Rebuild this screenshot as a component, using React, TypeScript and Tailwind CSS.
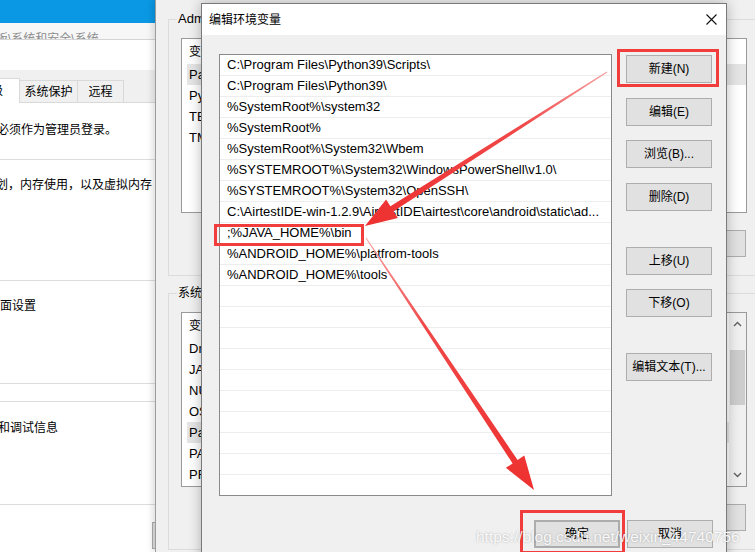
import React from "react";

const dialogPaths = [
  "C:\\Program Files\\Python39\\Scripts\\",
  "C:\\Program Files\\Python39\\",
  "%SystemRoot%\\system32",
  "%SystemRoot%",
  "%SystemRoot%\\System32\\Wbem",
  "%SYSTEMROOT%\\System32\\WindowsPowerShell\\v1.0\\",
  "%SYSTEMROOT%\\System32\\OpenSSH\\",
  "C:\\AirtestIDE-win-1.2.9\\AirtestIDE\\airtest\\core\\android\\static\\ad...",
  ";%JAVA_HOME%\\bin",
  "%ANDROID_HOME%\\platfrom-tools",
  "%ANDROID_HOME%\\tools",
  "", "", "", "", "", "", "", "", "", "", "",
];

const userVars = ["Path", "Python", "TEMP", "TMP"];
const systemVars = [
  "DriverData",
  "JAVA_HOME",
  "NUMBER_OF_PROCESSORS",
  "OS",
  "Path",
  "PATHEXT",
  "PROCESSOR_ARCHITECTURE",
];

function WinButton({
  label,
  className = "",
}: {
  label: string;
  className?: string;
}) {
  return (
    <div
      className={`flex w-[86px] items-center justify-center border border-[#adadad] bg-[#e1e1e1] text-[12px] ${className}`}
    >
      {label}
    </div>
  );
}

function VarList({ rows, scroll }: { rows: string[]; scroll?: boolean }) {
  return (
    <div className="relative h-[175px] border border-[#9a9a9a] bg-white text-[13px]">
      <div className="flex h-[25px] items-center pl-[7px] text-[12px]">变量</div>
      {rows.map((r) => (
        <div
          key={r}
          className={`ml-[5px] flex h-[21px] items-center pl-[2px] ${
            r === "Path" ? "bg-[#e5e5e5]" : ""
          }`}
        >
          {r}
        </div>
      ))}
      {scroll && (
        <div className="absolute right-0 top-0 flex h-full w-[17px] flex-col items-center bg-[#f0f0f0]">
          <svg width="9" height="6" className="mt-[8px]" viewBox="0 0 9 6">
            <path d="M1 5 L4.5 1.5 L8 5" fill="none" stroke="#606060" strokeWidth="1.4" />
          </svg>
          <div className="mt-[23px] h-[55px] w-[15px] bg-[#cdcdcd]" />
          <div className="flex-1" />
          <svg width="9" height="6" className="mb-[8px]" viewBox="0 0 9 6">
            <path d="M1 1 L4.5 4.5 L8 1" fill="none" stroke="#606060" strokeWidth="1.4" />
          </svg>
        </div>
      )}
    </div>
  );
}

function LeftWindow() {
  return (
    <div className="absolute left-0 top-0 flex h-[552px] w-[155px] flex-col overflow-hidden bg-white">
      <div className="h-[23px] bg-[#0a98e4]" />
      <div className="h-[17px] overflow-hidden border-b border-[#d4d4d4] bg-[#f7f7f7] pt-[8px] text-[12px] leading-[16px] text-[#8c8c8c]">
        <span className="ml-[-4px] whitespace-nowrap">板\系统和安全\系统</span>
      </div>
      <div className="h-[30px]" />
      <div className="flex h-[33px] items-end border-b border-[#d9d9d9] bg-[#f0f0f0]">
        <div className="-mb-px flex h-[25px] w-[20px] items-center overflow-hidden border-r border-t border-[#d9d9d9] bg-white">
          <span className="ml-[-9px]">级</span>
        </div>
        <div className="flex h-[22px] w-[58px] items-center justify-center border-r border-t border-[#d9d9d9]">
          系统保护
        </div>
        <div className="flex h-[22px] w-[46px] items-center justify-center border-r border-t border-[#d9d9d9]">
          远程
        </div>
      </div>
      <div className="h-[57px] border-b border-[#dcdcdc] pt-[19px] leading-[16px]">
        <span className="ml-[-3px] whitespace-nowrap">必须作为管理员登录。</span>
      </div>
      <div className="h-[121px] border-b border-[#dcdcdc] pt-[17px] leading-[16px]">
        <span className="ml-[-4px] whitespace-nowrap">划，内存使用，以及虚拟内存</span>
      </div>
      <div className="h-[103px] border-b border-[#dcdcdc] pt-[17px] leading-[16px]">
        <span className="whitespace-nowrap">面设置</span>
      </div>
      <div className="h-[18px] border-b border-[#dcdcdc]" />
      <div className="h-[103px] border-b border-[#dcdcdc] pt-[18px] leading-[16px]">
        <span className="ml-[-2px] whitespace-nowrap">和调试信息</span>
      </div>
      <div className="flex flex-1 justify-end pt-[17px]">
        <div className="h-[27px] w-[3px] border border-r-0 border-[#adadad] bg-[#e1e1e1]" />
      </div>
    </div>
  );
}

function MiddleWindow() {
  return (
    <div className="absolute left-[155px] top-0 h-[552px] w-[620px] border-l border-[#9c9c9c] bg-[#f0f0f0] pl-[12px] pt-[19px] shadow-[-3px_0_6px_rgba(0,0,0,0.12)]">
      <div className="relative h-[257px] w-[592px] border border-[#dcdcdc] px-[12px] pt-[18px]">
        <span className="absolute left-[8px] top-[-9px] bg-[#f0f0f0] px-[1px] text-[13px] leading-[16px]">
          Administrator 的用户变量
        </span>
        <VarList rows={userVars} />
        <div className="mt-[17px] flex h-[27px] justify-end gap-[8px] pr-[1px]">
          <WinButton label="新建(N)..." />
          <WinButton label="编辑(E)..." />
          <WinButton label="删除(D)" />
        </div>
      </div>
      <div className="relative mt-[17px] h-[257px] w-[592px] border border-[#dcdcdc] px-[12px] pt-[18px]">
        <span className="absolute left-[8px] top-[-9px] bg-[#f0f0f0] px-[1px] leading-[16px]">
          系统变量
        </span>
        <VarList rows={systemVars} scroll />
        <div className="mt-[17px] flex h-[27px] justify-end gap-[8px] pr-[1px]">
          <WinButton label="新建(W)..." />
          <WinButton label="编辑(I)..." />
          <WinButton label="删除(L)" />
        </div>
      </div>
    </div>
  );
}

function EditDialog() {
  return (
    <div className="absolute left-[201px] top-[3px] flex h-[560px] w-[526px] flex-col border border-[#7a7a7a] bg-[#f0f0f0] shadow-[0_0_12px_rgba(0,0,0,0.28)]">
      <div className="flex h-[31px] items-center justify-between bg-white pl-[7px] pr-[9px]">
        <span className="text-[12px]">编辑环境变量</span>
        <svg width="11" height="11" viewBox="0 0 11 11">
          <path d="M0.5 0.5 L10.5 10.5 M10.5 0.5 L0.5 10.5" stroke="#111" strokeWidth="1.1" />
        </svg>
      </div>
      <div className="flex pl-[17px] pt-[19px]">
        <div className="h-[442px] w-[393px] overflow-hidden border border-[#8a8a8a] bg-white text-[13px]">
          {dialogPaths.map((p, i) => (
            <div
              key={i}
              className="flex h-[21px] items-center whitespace-nowrap border-b border-[#ededed] pl-[7px]"
            >
              {p}
            </div>
          ))}
        </div>
        <div className="ml-[14px] flex flex-col pt-px">
          <WinButton label="新建(N)" className="h-[28px]" />
          <WinButton label="编辑(E)" className="mt-[15px] h-[28px]" />
          <WinButton label="浏览(B)..." className="mt-[14px] h-[28px]" />
          <WinButton label="删除(D)" className="mt-[15px] h-[28px]" />
          <WinButton label="上移(U)" className="mt-[36px] h-[28px]" />
          <WinButton label="下移(O)" className="mt-[14px] h-[28px]" />
          <WinButton label="编辑文本(T)..." className="mt-[36px] h-[28px]" />
        </div>
      </div>
      <div className="mt-[24px] flex justify-end gap-[7px] pr-[13px]">
        <WinButton label="确定" className="h-[28px] border-2 border-[#0078d7]" />
        <WinButton label="取消" className="h-[28px]" />
      </div>
    </div>
  );
}

function Annotations() {
  return (
    <>
      <svg className="pointer-events-none absolute left-0 top-0" width="755" height="552">
        <defs>
          <linearGradient id="a1" x1="607" y1="72" x2="365" y2="226" gradientUnits="userSpaceOnUse">
            <stop offset="0" stopColor="#f7a0a0" />
            <stop offset="0.35" stopColor="#f04848" />
            <stop offset="1" stopColor="#ee3030" />
          </linearGradient>
          <linearGradient id="a2" x1="366" y1="238" x2="534" y2="490" gradientUnits="userSpaceOnUse">
            <stop offset="0" stopColor="#f7a0a0" />
            <stop offset="0.35" stopColor="#f04848" />
            <stop offset="1" stopColor="#ee3030" />
          </linearGradient>
        </defs>
        <polygon
          fill="url(#a1)"
          points="606.7,71.6 390.4,206.3 386.1,199.5 365,226 397.9,218.1 393.6,211.3 607.3,72.4"
        />
        <polygon
          fill="url(#a2)"
          points="365.6,238.3 512.6,463.4 505.9,467.8 534,490 524.3,455.6 517.6,460 366.4,237.7"
        />
      </svg>
      <div className="absolute left-[617px] top-[49px] h-[38px] w-[102px] border-[3px] border-[#f23d3d]" />
      <div className="absolute left-[214px] top-[224px] h-[22px] w-[150px] border-[3px] border-[#f23d3d]" />
      <div className="absolute left-[520px] top-[510px] h-[44px] w-[105px] border-[3px] border-[#f23d3d]" />
      <div className="pointer-events-none absolute left-[476px] top-[527px] whitespace-nowrap font-['Liberation_Sans',sans-serif] text-[15.5px] leading-[20px] text-white/90 [text-shadow:0_0_2px_rgba(0,0,0,0.3)]">
        https://blog.csdn.net/weixin_44740756
      </div>
    </>
  );
}

export default function App() {
  return (
    <div className="relative h-[552px] w-[755px] overflow-hidden bg-[#f0f0f0] font-['Liberation_Sans','Noto_Sans_CJK_SC',sans-serif] text-[12px] text-black">
      <LeftWindow />
      <MiddleWindow />
      <EditDialog />
      <Annotations />
    </div>
  );
}
